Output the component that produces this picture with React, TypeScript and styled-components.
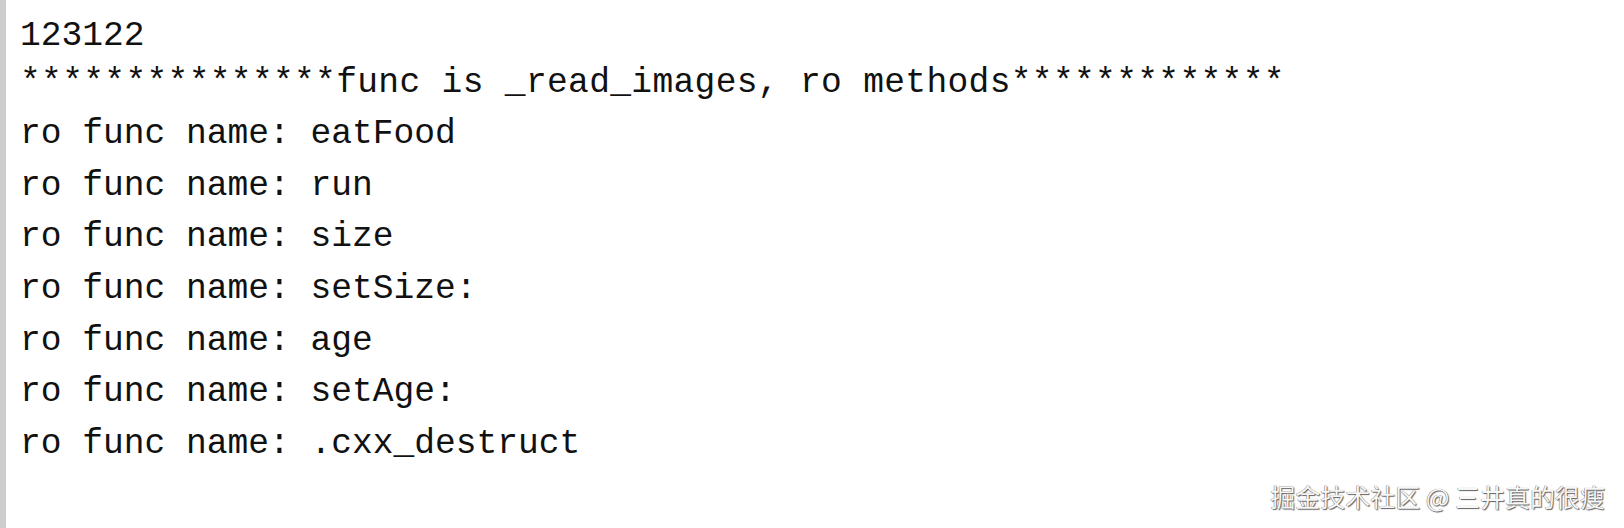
import React from "react";
import styled, { createGlobalStyle } from "styled-components";

const GlobalStyle = createGlobalStyle`
  html, body {
    margin: 0;
    padding: 0;
    background: #ffffff;
  }
  #root {
    width: 1624px;
    height: 528px;
  }
`;

const Screen = styled.div`
  position: relative;
  width: 1624px;
  height: 528px;
  box-sizing: border-box;
  background: #ffffff;
  border-left: 6px solid #cdcdcd;
  overflow: hidden;
`;

const Console = styled.div`
  display: flex;
  flex-direction: column;
  padding: 13.3px 0 0 14px;
  font-family: "Liberation Mono", "DejaVu Sans Mono", monospace;
  font-size: 34.6px;
  color: #111111;
  white-space: pre;
`;

const Line = styled.div<{ $h: number; $spread?: number }>`
  height: ${(p) => p.$h}px;
  line-height: ${(p) => p.$h}px;
  letter-spacing: ${(p) => p.$spread ?? 0}px;
`;

const Watermark = styled.div`
  position: absolute;
  right: 19px;
  bottom: 19px;
  font-family: "Noto Sans CJK SC", "Noto Sans", sans-serif;
  font-size: 25px;
  line-height: 26px;
  color: #f7f7f7;
  text-shadow: 1px 1px 1px rgba(0, 0, 0, 0.6), -0.5px -0.5px 0.5px rgba(0, 0, 0, 0.35),
    0 0 1px rgba(0, 0, 0, 0.4);
  white-space: pre;
`;

const lines: { text: string; h: number; spread?: number }[] = [
  { text: "123122", h: 46 },
  { text: "***************func is _read_images, ro methods*************", h: 48.7, spread: 0.33 },
  { text: "ro func name: eatFood", h: 51.7 },
  { text: "ro func name: run", h: 51.7 },
  { text: "ro func name: size", h: 51.7 },
  { text: "ro func name: setSize:", h: 51.7 },
  { text: "ro func name: age", h: 51.7 },
  { text: "ro func name: setAge:", h: 51.7 },
  { text: "ro func name: .cxx_destruct", h: 51.7 },
];

export default function App() {
  return (
    <>
      <GlobalStyle />
      <Screen>
        <Console>
          {lines.map((l, i) => (
            <Line key={i} $h={l.h} $spread={l.spread}>
              {l.text}
            </Line>
          ))}
        </Console>
        <Watermark>掘金技术社区 @ 三井真的很瘦</Watermark>
      </Screen>
    </>
  );
}
